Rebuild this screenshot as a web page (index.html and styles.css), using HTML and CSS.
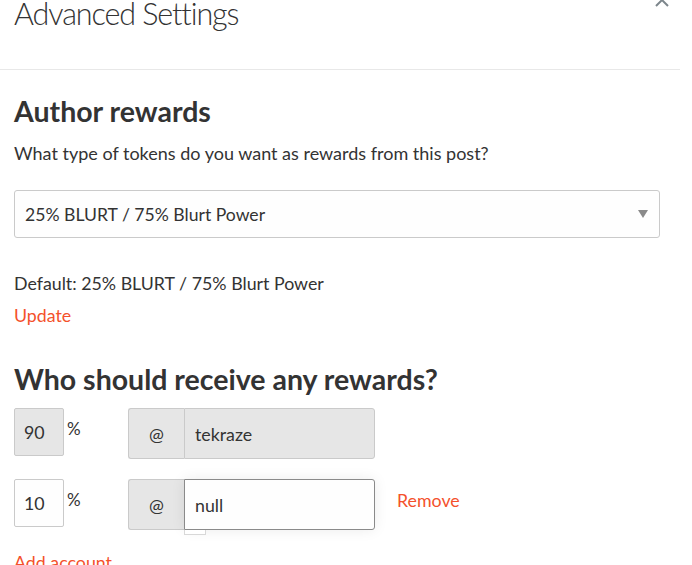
FILE: index.html
```html
<!DOCTYPE html>
<html lang="en">
  <head>
    <meta charset="UTF-8" />
    <meta name="viewport" content="width=device-width, initial-scale=1.0" />
    <title>Advanced Settings</title>
    <link rel="stylesheet" href="styles.css">
  </head>
  <body>
    <div class="modal">
      <!-- Modal sarlavhasi -->
      <div class="modal-header">
        <h2>Advanced Settings</h2>
        <button class="close-button" type="button" aria-label="Close">
          <svg width="14" height="14" viewBox="0 0 14 14">
            <path d="M1 1 L13 13 M13 1 L1 13" stroke="#7d868c" stroke-width="2" fill="none" />
          </svg>
        </button>
      </div>

      <div class="modal-body">
        <h3>Author rewards</h3>
        <p class="hint">What type of tokens do you want as rewards from this post?</p>

        <div class="select-box">
          <span>25% BLURT / 75% Blurt Power</span>
          <span class="caret"></span>
        </div>

        <p class="default-text">Default: 25% BLURT / 75% Blurt Power</p>
        <a class="link" href="#">Update</a>

        <h3 class="beneficiaries-title">Who should receive any rewards?</h3>

        <!-- Benefitsiarlar ro'yxati -->
        <div class="beneficiary">
          <input class="percent disabled" type="text" value="90" disabled />
          <span class="percent-sign">%</span>
          <div class="input-group">
            <span class="addon">@</span>
            <input class="account disabled" type="text" value="tekraze" disabled />
          </div>
        </div>

        <div class="beneficiary">
          <input class="percent" type="text" value="10" />
          <span class="percent-sign">%</span>
          <div class="input-group">
            <span class="addon">@</span>
            <div class="account-wrap">
              <input class="account focused" type="text" value="null" />
              <div class="suggest"></div>
            </div>
          </div>
          <a class="link remove" href="#">Remove</a>
        </div>

        <a class="link add-account" href="#">Add account</a>
      </div>
    </div>
  </body>
</html>
```

FILE: styles.css
```css
body {
  margin: 0;
  font-family: Lato, "Liberation Sans", sans-serif;
  color: #333;
  background: #fff;
  overflow: hidden;
}

.modal {
  position: relative;
  width: 680px;
}

.modal-header {
  display: flow-root;
  height: 69px;
  border-bottom: 1px solid #e8e8e8;
  padding: 0 14px;
}

.modal-header h2 {
  margin: 0;
  margin-top: -5px;
  font-size: 30.5px;
  font-weight: 300;
  letter-spacing: -1.1px;
  line-height: 36px;
  color: #333;
}

.close-button {
  position: absolute;
  top: -7px;
  left: 655px;
  border: 0;
  background: none;
  padding: 0;
  line-height: 0;
}

.modal-body {
  padding: 0 20px 0 14px;
}

h3 {
  margin: 24px 0 0;
  font-size: 28.5px;
  font-weight: 700;
  line-height: 34px;
  color: #333;
}

.hint {
  margin: 12px 0 0;
  font-size: 18px;
  line-height: 26px;
}

.select-box {
  box-sizing: border-box;
  margin-top: 24px;
  height: 48px;
  border: 1px solid #cacaca;
  border-radius: 3px;
  background: #fefefe;
  display: flex;
  align-items: center;
  justify-content: space-between;
  padding: 0 11px 0 10px;
  font-size: 17.6px;
}

.caret {
  width: 0;
  height: 0;
  border-left: 5px solid transparent;
  border-right: 5px solid transparent;
  border-top: 8px solid #8a8a8a;
}

.default-text {
  margin: 32px 0 0;
  font-size: 17.8px;
  line-height: 26px;
}

.link {
  display: block;
  color: #f4512c;
  text-decoration: none;
  font-size: 17.8px;
  line-height: 26px;
  margin-top: 6px;
}

.beneficiaries-title {
  margin-top: 34px;
}

.beneficiary {
  display: flex;
  align-items: flex-start;
  margin-top: 12px;
}

.beneficiary + .beneficiary {
  margin-top: 20px;
}

.percent {
  box-sizing: border-box;
  width: 50px;
  height: 48px;
  margin: 0;
  padding: 0 9px;
  border: 1px solid #cacaca;
  border-radius: 2px;
  background: #fefefe;
  font-family: inherit;
  font-size: 17.8px;
  color: #333;
}

.disabled {
  background: #e6e6e6;
}

.percent-sign {
  margin-left: 3px;
  width: 61px;
  font-size: 17px;
  line-height: 18px;
  padding-top: 12px;
}

.input-group {
  display: flex;
  width: 247px;
  height: 51px;
}

.addon {
  box-sizing: border-box;
  width: 56px;
  display: flex;
  align-items: center;
  justify-content: center;
  border: 1px solid #cacaca;
  border-right: 0;
  border-radius: 3px 0 0 3px;
  background: #e6e6e6;
  font-size: 17.8px;
}

.account {
  box-sizing: border-box;
  flex: 1;
  width: 100%;
  height: 51px;
  margin: 0;
  padding: 0 10px;
  border: 1px solid #cacaca;
  border-radius: 0 3px 3px 0;
  font-family: inherit;
  font-size: 17.8px;
  color: #333;
}

.account-wrap {
  position: relative;
  flex: 1;
  display: flex;
}

.account.focused {
  background: #fefefe;
  border-color: #8a8a8a;
  box-shadow: 0 0 14px rgba(0, 0, 0, 0.08);
  outline: none;
}

.suggest {
  position: absolute;
  left: 0;
  top: 51px;
  width: 20px;
  height: 4px;
  border: 1px solid #d8d8d8;
  border-top: 0;
  background: #fff;
}

.remove {
  margin: 8px 0 0 22px;
}

.add-account {
  margin-top: 19px;
}
```
